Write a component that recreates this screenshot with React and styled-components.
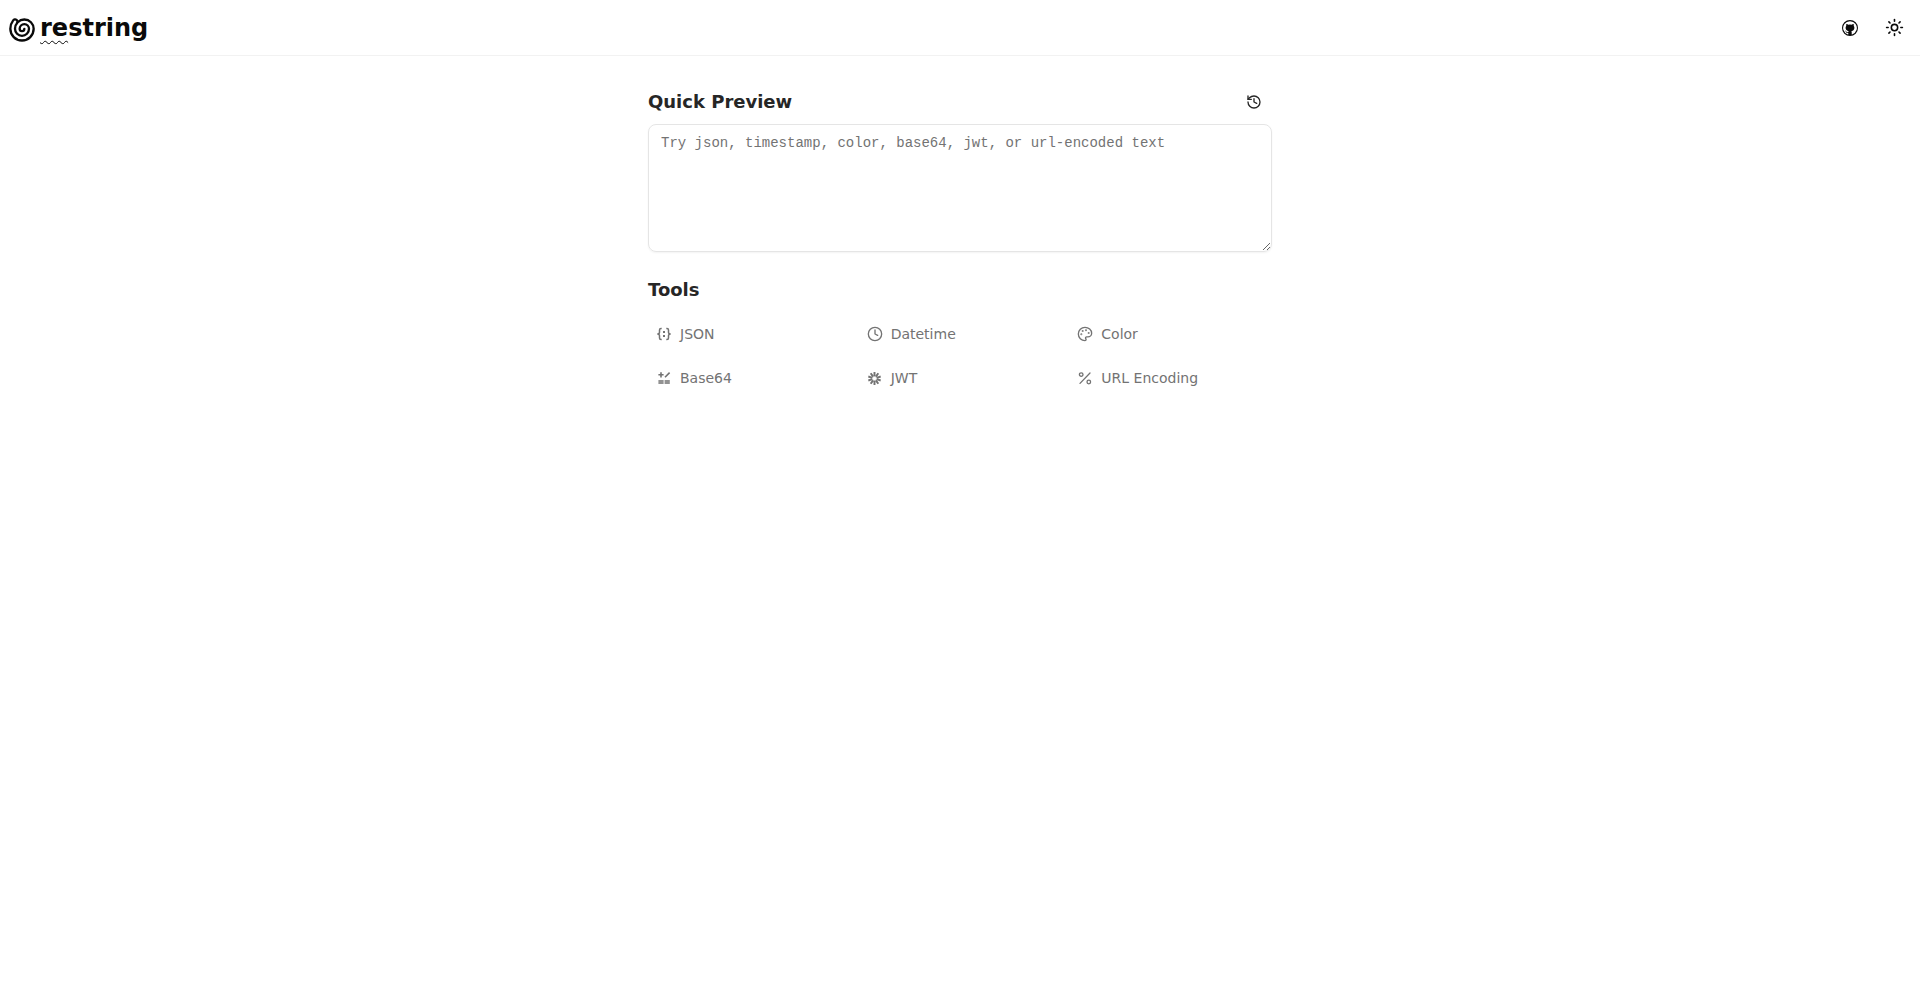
import React from "react";
import styled, { createGlobalStyle } from "styled-components";
import { LuClock4, LuHistory, LuPalette, LuShell, LuSun } from "react-icons/lu";
import { VscGithub } from "react-icons/vsc";
import { SiJsonwebtokens } from "react-icons/si";

const GlobalStyle = createGlobalStyle`
  *, *::before, *::after { box-sizing: border-box; }
  body {
    margin: 0;
    background: #fff;
    color: #262626;
    font-family: "DejaVu Sans", sans-serif;
    font-size: 16px;
    line-height: 24px;
  }
`;

const Header = styled.header`
  display: flex;
  align-items: center;
  justify-content: space-between;
  height: 56px;
  padding: 0 8px;
  border-bottom: 1px solid #f2f2f2;
  color: #0a0a0a;
`;

const Brand = styled.a`
  display: flex;
  align-items: flex-end;
  gap: 4px;
  color: inherit;
  text-decoration: none;
  font-size: 24px;
  font-weight: 700;
  line-height: 32px;
`;

const Wavy = styled.span`
  text-decoration: underline wavy 1px;
  text-underline-offset: 4px;
`;

const Actions = styled.nav`
  display: flex;
  gap: 8px;
`;

const IconButton = styled.button`
  display: flex;
  align-items: center;
  justify-content: center;
  width: 36px;
  height: 36px;
  padding: 0;
  border: 0;
  border-radius: 6px;
  background: transparent;
  color: inherit;
  cursor: pointer;
`;

const Main = styled.main`
  max-width: 672px;
  margin: 0 auto;
  padding: 28px 24px;
`;

const SectionHead = styled.div`
  display: flex;
  align-items: center;
  justify-content: space-between;
  margin-bottom: 4px;
`;

const Heading = styled.h2`
  margin: 0;
  font-size: 18px;
  font-weight: 600;
  line-height: 28px;
`;

const Input = styled.textarea`
  display: block;
  width: 100%;
  height: 128px;
  padding: 8px 12px;
  border: 1px solid #e5e5e5;
  border-radius: 8px;
  background: transparent;
  box-shadow: 0 1px 2px rgba(0, 0, 0, 0.05);
  color: inherit;
  font-family: "Liberation Mono", monospace;
  font-size: 14px;
  line-height: 20px;
  resize: vertical;
  &::placeholder { color: #737373; opacity: 1; }
`;

const Tools = styled.section`
  margin-top: 24px;
`;

const ToolGrid = styled.nav`
  display: grid;
  grid-template-columns: repeat(3, 1fr);
  gap: 8px;
  margin-top: 12px;
`;

const ToolLink = styled.a`
  display: flex;
  align-items: center;
  gap: 8px;
  height: 36px;
  padding: 0 8px;
  border-radius: 6px;
  color: #737373;
  font-size: 14px;
  line-height: 20px;
  text-decoration: none;
`;

const IconSlot = styled.span`
  display: flex;
  align-items: center;
  justify-content: center;
  flex: none;
  width: 16px;
  height: 16px;
`;

function JsonIcon({ size }) {
  return (
    <svg width={size} height={size} viewBox="0 0 16 16" fill="none" stroke="currentColor" strokeWidth="1.5" aria-hidden="true">
      <path d="M5.7 2.4H5Q3.5 2.4 3.5 3.9V6.2Q3.5 8 1.3 8Q3.5 8 3.5 9.8V12.1Q3.5 13.6 5 13.6H5.7" />
      <path d="M10.3 2.4H11Q12.5 2.4 12.5 3.9V6.2Q12.5 8 14.7 8Q12.5 8 12.5 9.8V12.1Q12.5 13.6 11 13.6H10.3" />
      <path d="M7 6h2M7 10h2" strokeWidth="2" />
    </svg>
  );
}

function Base64Icon({ size }) {
  return (
    <svg width={size} height={size} viewBox="0 0 16 16" fill="none" stroke="currentColor" strokeWidth="1.6" aria-hidden="true">
      <path d="M2.4 4.8h5.2M5 2.2v5.2M9 7.2L13.6 2.6" />
      <path d="M2.4 12h5.2M8.6 12h5.2" strokeWidth="4" opacity="0.78" />
    </svg>
  );
}

function PercentIcon({ size }) {
  return (
    <svg width={size} height={size} viewBox="0 0 16 16" fill="none" stroke="currentColor" strokeWidth="1.3" strokeLinecap="round" aria-hidden="true">
      <path d="M13 3L3 13.4" />
      <circle cx="4.2" cy="4.6" r="1.8" />
      <circle cx="11.8" cy="12" r="1.8" />
    </svg>
  );
}

const tools = [
  { name: "JSON", Icon: JsonIcon },
  { name: "Datetime", Icon: LuClock4 },
  { name: "Color", Icon: LuPalette },
  { name: "Base64", Icon: Base64Icon },
  { name: "JWT", Icon: SiJsonwebtokens, size: 13 },
  { name: "URL Encoding", Icon: PercentIcon },
];

export default function App() {
  return (
    <>
      <GlobalStyle />
      <Header>
        <Brand href="#">
          <LuShell size={28} />
          <span><Wavy>re</Wavy>string</span>
        </Brand>
        <Actions>
          <IconButton aria-label="GitHub"><VscGithub size={16} /></IconButton>
          <IconButton aria-label="Toggle theme"><LuSun size={19} /></IconButton>
        </Actions>
      </Header>
      <Main>
        <SectionHead>
          <Heading>Quick Preview</Heading>
          <IconButton aria-label="History"><LuHistory size={16} /></IconButton>
        </SectionHead>
        <Input aria-label="Quick Preview" placeholder="Try json, timestamp, color, base64, jwt, or url-encoded text" />
        <Tools>
          <Heading>Tools</Heading>
          <ToolGrid>
            {tools.map(({ name, Icon, size = 16 }) => (
              <ToolLink key={name} href="#">
                <IconSlot><Icon size={size} /></IconSlot>
                {name}
              </ToolLink>
            ))}
          </ToolGrid>
        </Tools>
      </Main>
    </>
  );
}
